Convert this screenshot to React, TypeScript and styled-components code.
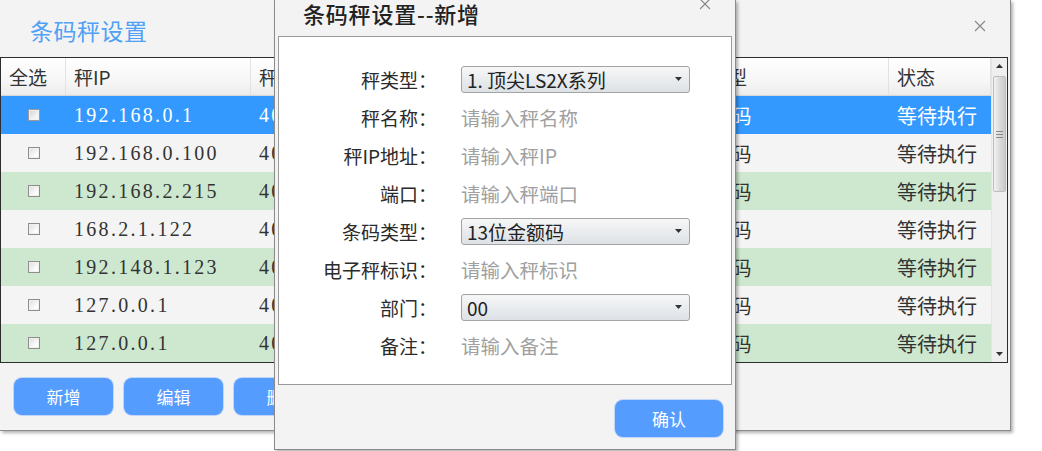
import * as React from 'react';
import styled, { createGlobalStyle } from 'styled-components';

const GlobalStyle = createGlobalStyle`
  html, body {
    margin: 0;
    padding: 0;
    background: #ffffff;
  }
  body {
    font-family: "Noto Sans CJK SC", "Noto Sans", sans-serif;
    color: #333;
  }
`;

const CJK = `"Noto Sans CJK SC", "Noto Sans", sans-serif`;
const SERIF = `"Liberation Serif", "Noto Sans CJK SC", serif`;

const Stage = styled.div`
  position: relative;
  width: 1042px;
  height: 451px;
  overflow: hidden;
`;

const Window = styled.div`
  width: 1010px;
  height: 430px;
  background: #f3f3f3;
  border-right: 1px solid #8c8c8c;
  border-bottom: 1px solid #8c8c8c;
  box-shadow: 2px 2px 3px rgba(0, 0, 0, 0.3);
  display: flex;
  flex-direction: column;
`;

const TitleBar = styled.div`
  height: 57px;
  display: flex;
  align-items: center;
  justify-content: space-between;
  padding: 2px 22px 0 30px;
  box-sizing: border-box;
`;

const Title = styled.div`
  font-family: ${CJK};
  font-size: 23px;
  color: #4ea1f5;
  letter-spacing: 0.5px;
`;

const CloseBtn = styled.button<{ $top?: number }>`
  border: none;
  background: transparent;
  padding: 0;
  width: 16px;
  height: 16px;
  display: flex;
  align-items: center;
  justify-content: center;
  cursor: pointer;
  align-self: ${({ $top }) => ($top !== undefined ? 'flex-start' : 'center')};
  margin-top: ${({ $top }) => ($top !== undefined ? `${$top}px` : '-8px')};
`;

const TableBox = styled.div`
  display: flex;
  width: 1006px;
  border: 1px solid #2d2d2d;
`;

const Grid = styled.div`
  flex: 1;
  display: grid;
  grid-template-columns: 65px 185px 205px 207px 226px 102px;
  grid-auto-rows: 38px;
`;

const HeadCell = styled.div`
  display: flex;
  align-items: center;
  padding-left: 8px;
  font-family: ${CJK};
  font-size: 19px;
  color: #333;
  background: linear-gradient(#ffffff 0%, #f7f7f7 60%, #ececec 100%);
  border-right: 1px solid #e2e2e2;
  border-bottom: 1px solid #d6d6d6;
  box-sizing: border-box;
`;

type Tone = 'selected' | 'plain' | 'green';

const rowBg: Record<Tone, string> = {
  selected: '#3399ff',
  plain: '#f4f4f4',
  green: '#cde8cf',
};

const Cell = styled.div<{ $tone: Tone; $serif?: boolean; $center?: boolean }>`
  display: flex;
  align-items: center;
  justify-content: ${({ $center }) => ($center ? 'center' : 'flex-start')};
  padding-left: ${({ $center }) => ($center ? '0' : '8px')};
  background: ${({ $tone }) => rowBg[$tone]};
  color: ${({ $tone }) => ($tone === 'selected' ? '#ffffff' : '#333')};
  font-family: ${({ $serif }) => ($serif ? SERIF : CJK)};
  font-size: 20px;
  letter-spacing: ${({ $serif }) => ($serif ? '2.3px' : '0')};
  white-space: nowrap;
  overflow: hidden;
`;

const Check = styled.span<{ $on?: boolean }>`
  width: 12px;
  height: 12px;
  box-sizing: border-box;
  border: 1px solid ${({ $on }) => ($on ? '#9a9a9a' : '#8e8e8e')};
  background: ${({ $on }) =>
    $on ? 'linear-gradient(135deg, #cfcfcf, #f5f5f5 70%)' : 'linear-gradient(135deg, #dcdcdc, #fdfdfd 70%)'};
  box-shadow: inset 0 0 0 1px #f0f0f0;
`;

const ScrollBar = styled.div`
  width: 16px;
  display: flex;
  flex-direction: column;
  background: #efefef;
  border-left: 1px solid #e4e4e4;
`;

const ArrowBtn = styled.div`
  height: 16px;
  display: flex;
  align-items: center;
  justify-content: center;
`;

const Track = styled.div`
  flex: 1;
  display: flex;
  flex-direction: column;
  padding: 2px 1px 0;
`;

const Thumb = styled.div`
  height: 114px;
  border: 1px solid #bdbdbd;
  border-radius: 2px;
  background: linear-gradient(90deg, #f2f2f2, #d9d9d9 55%, #cbcbcb);
  display: flex;
  flex-direction: column;
  align-items: center;
  justify-content: center;
  gap: 2px;
`;

const Grip = styled.span`
  width: 7px;
  height: 1px;
  background: #8a8a8a;
`;

const Toolbar = styled.div`
  display: flex;
  gap: 11px;
  padding: 15px 0 0 14px;
`;

const BlueButton = styled.button<{ $w?: number }>`
  width: ${({ $w }) => $w ?? 99}px;
  height: 37px;
  border: none;
  border-radius: 8px;
  background: #559cff;
  color: #ffffff;
  font-family: ${CJK};
  font-size: 17px;
  cursor: pointer;
  box-shadow: 0 0 0 1px rgba(120, 170, 255, 0.4);
`;

/* modal dialog on top of the window */
const Dialog = styled.div`
  position: absolute;
  left: 274px;
  top: 0;
  width: 462px;
  height: 450px;
  background: #f3f3f3;
  border: 1px solid #8a8a8a;
  border-top: none;
  box-shadow: 2px 2px 3px rgba(0, 0, 0, 0.3);
  box-sizing: border-box;
  display: flex;
  flex-direction: column;
`;

const DialogHead = styled.div`
  height: 36px;
  display: flex;
  justify-content: space-between;
  padding: 0 22px 0 28px;
`;

const DialogTitle = styled.div`
  font-family: ${CJK};
  font-size: 22px;
  font-weight: 500;
  color: #222;
  line-height: 26px;
  letter-spacing: 0.8px;
`;

const Panel = styled.div`
  margin: 0 3px;
  height: 349px;
  box-sizing: border-box;
  background: #ffffff;
  border: 1px solid #9a9a9a;
  padding-top: 23px;
`;

const Form = styled.div`
  display: grid;
  grid-template-columns: 158px 229px;
  column-gap: 24px;
  grid-auto-rows: 38px;
`;

const Label = styled.div`
  display: flex;
  align-items: center;
  justify-content: flex-end;
  font-family: ${CJK};
  font-size: 19px;
  color: #2b2b2b;
`;

const Field = styled.div`
  display: flex;
  align-items: center;
`;

const Placeholder = styled.span`
  font-family: ${CJK};
  font-size: 19.5px;
  color: #a0a0a0;
`;

const Select = styled.div`
  width: 229px;
  height: 27px;
  box-sizing: border-box;
  border: 1px solid #a3a3a3;
  border-radius: 3px;
  background: linear-gradient(#f7f7f7, #e9ecef 50%, #dde2e6);
  display: flex;
  align-items: center;
  justify-content: space-between;
  padding: 0 7px 0 5px;
  font-family: ${CJK};
  font-size: 19px;
  color: #222;
`;

const DialogFoot = styled.div`
  flex: 1;
  display: flex;
  justify-content: flex-end;
  align-items: flex-start;
  padding: 15px 12px 0 0;
`;

const XIcon = ({ size = 12 }: { size?: number }) => (
  <svg width={size} height={size} viewBox="0 0 12 12">
    <path d="M1 1 L11 11 M11 1 L1 11" stroke="#8a8a8a" strokeWidth="1.2" fill="none" />
  </svg>
);

const Caret = ({ up }: { up?: boolean }) => (
  <svg width="7" height="4" viewBox="0 0 7 4">
    <path d={up ? 'M0 4 L3.5 0 L7 4 Z' : 'M0 0 L7 0 L3.5 4 Z'} fill="#333" />
  </svg>
);

const rows = [
  { ip: '192.168.0.1', port: '4001', name: '1号秤', type: 'EAN13码', tone: 'selected' as Tone },
  { ip: '192.168.0.100', port: '4001', name: '2号秤', type: 'EAN13码', tone: 'plain' as Tone },
  { ip: '192.168.2.215', port: '4001', name: '3号秤', type: 'EAN13码', tone: 'green' as Tone },
  { ip: '168.2.1.122', port: '4001', name: '4号秤', type: 'EAN13码', tone: 'plain' as Tone },
  { ip: '192.148.1.123', port: '4001', name: '5号秤', type: 'EAN13码', tone: 'green' as Tone },
  { ip: '127.0.0.1', port: '4001', name: '6号秤', type: 'EAN13码', tone: 'plain' as Tone },
  { ip: '127.0.0.1', port: '4001', name: '7号秤', type: 'EAN13码', tone: 'green' as Tone },
];

const fields: { label: string; select?: string; placeholder?: string }[] = [
  { label: '秤类型：', select: '1. 顶尖LS2X系列' },
  { label: '秤名称：', placeholder: '请输入秤名称' },
  { label: '秤IP地址：', placeholder: '请输入秤IP' },
  { label: '端口：', placeholder: '请输入秤端口' },
  { label: '条码类型：', select: '13位金额码' },
  { label: '电子秤标识：', placeholder: '请输入秤标识' },
  { label: '部门：', select: '00' },
  { label: '备注：', placeholder: '请输入备注' },
];

export default function App() {
  return (
    <>
      <GlobalStyle />
      <Stage>
        <Window>
          <TitleBar>
            <Title>条码秤设置</Title>
            <CloseBtn><XIcon /></CloseBtn>
          </TitleBar>
          <TableBox>
            <Grid>
              <HeadCell>全选</HeadCell>
              <HeadCell>秤IP</HeadCell>
              <HeadCell>秤端口</HeadCell>
              <HeadCell>秤名称</HeadCell>
              <HeadCell>条码类型</HeadCell>
              <HeadCell>状态</HeadCell>
              {rows.map((r, i) => (
                <React.Fragment key={i}>
                  <Cell $tone={r.tone} $center><Check $on={r.tone === 'selected'} /></Cell>
                  <Cell $tone={r.tone} $serif>{r.ip}</Cell>
                  <Cell $tone={r.tone} $serif>{r.port}</Cell>
                  <Cell $tone={r.tone}>{r.name}</Cell>
                  <Cell $tone={r.tone}>{r.type}</Cell>
                  <Cell $tone={r.tone}>等待执行</Cell>
                </React.Fragment>
              ))}
            </Grid>
            <ScrollBar>
              <ArrowBtn><Caret up /></ArrowBtn>
              <Track>
                <Thumb>
                  <Grip /><Grip /><Grip />
                </Thumb>
              </Track>
              <ArrowBtn><Caret /></ArrowBtn>
            </ScrollBar>
          </TableBox>
          <Toolbar>
            <BlueButton>新增</BlueButton>
            <BlueButton>编辑</BlueButton>
            <BlueButton>删除</BlueButton>
          </Toolbar>
        </Window>

        <Dialog>
          <DialogHead>
            <DialogTitle>条码秤设置--新增</DialogTitle>
            <CloseBtn $top={-4}><XIcon /></CloseBtn>
          </DialogHead>
          <Panel>
            <Form>
              {fields.map((f) => (
                <React.Fragment key={f.label}>
                  <Label>{f.label}</Label>
                  <Field>
                    {f.select ? (
                      <Select>
                        <span>{f.select}</span>
                        <Caret />
                      </Select>
                    ) : (
                      <Placeholder>{f.placeholder}</Placeholder>
                    )}
                  </Field>
                </React.Fragment>
              ))}
            </Form>
          </Panel>
          <DialogFoot>
            <BlueButton $w={108}>确认</BlueButton>
          </DialogFoot>
        </Dialog>
      </Stage>
    </>
  );
}
